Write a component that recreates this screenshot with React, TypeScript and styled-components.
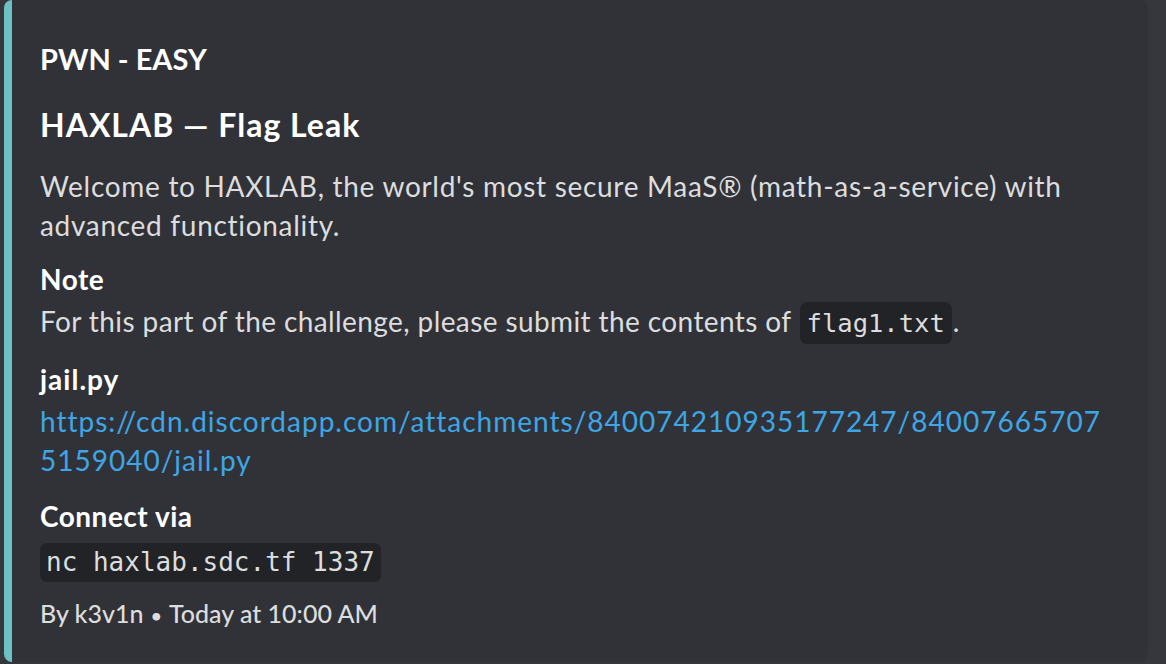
import React from "react";
import styled, { createGlobalStyle } from "styled-components";

const Global = createGlobalStyle`
  html, body {
    margin: 0;
    padding: 0;
    background: #36373c;
    overflow: hidden;
  }
  #root {
    width: 1166px;
    height: 664px;
  }
`;

const Page = styled.div`
  box-sizing: border-box;
  width: 1166px;
  height: 664px;
  padding: 0 18px 0 4px;
  background: #36373c;
  font-family: Lato, "Open Sans", sans-serif;
`;

const Embed = styled.article`
  box-sizing: border-box;
  display: flex;
  flex-direction: column;
  width: 1144px;
  height: 662px;
  padding: 41px 34px 0 28px;
  background: #313237;
  border-left: 8px solid #6cc2c3;
  border-radius: 8px;
`;

const Author = styled.div`
  font-size: 29px;
  line-height: 36px;
  font-weight: 700;
  color: #ffffff;
`;

const Title = styled.div`
  margin-top: 28px;
  font-size: 32px;
  line-height: 40px;
  font-weight: 700;
  letter-spacing: 1px;
  color: #ffffff;
`;

const Description = styled.div`
  margin-top: 22px;
  font-size: 28px;
  line-height: 39px;
  letter-spacing: 0.7px;
  color: #dcddde;
`;

const Fields = styled.div`
  display: flex;
  flex-direction: column;
  gap: 17px;
  margin-top: 15px;
`;

const Field = styled.div`
  display: flex;
  flex-direction: column;
  gap: 3px;
`;

const FieldName = styled.div<{ $spacing?: number }>`
  font-size: 28px;
  line-height: 39px;
  font-weight: 700;
  letter-spacing: ${(p) => p.$spacing ?? 0.5}px;
  color: #ffffff;
`;

const FieldValue = styled.div`
  font-size: 28px;
  line-height: 39px;
  letter-spacing: 0.4px;
  color: #dcddde;
  overflow-wrap: anywhere;
  word-break: break-all;
`;

const InlineCode = styled.code`
  font-family: "DejaVu Sans Mono", "Liberation Mono", monospace;
  font-size: 25.5px;
  letter-spacing: 0;
  padding: 6px 7px;
  margin: 0 1px;
  background: #222326;
  border-radius: 7px;
  color: #dcddde;
`;

const CodeBlock = styled.pre`
  align-self: flex-start;
  margin: 4px 0 0;
  padding: 6px 6px;
  font-family: "DejaVu Sans Mono", "Liberation Mono", monospace;
  font-size: 26px;
  line-height: 27px;
  background: #222326;
  border-radius: 7px;
  color: #dcddde;
`;

const Link = styled.a`
  color: #3ea6e6;
  letter-spacing: 1px;
  text-decoration: none;
`;

const Footer = styled.div`
  margin-top: 15px;
  font-size: 25px;
  line-height: 32px;
  font-weight: 500;
  color: #dcddde;
`;

const Dot = styled.span`
  margin: 0 7px;
  font-size: 20px;
`;

export default function App() {
  return (
    <Page>
      <Global />
      <Embed>
        <Author>PWN - EASY</Author>
        <Title>HAXLAB — Flag Leak</Title>
        <Description>
          Welcome to HAXLAB, the world's most secure MaaS® (math-as-a-service)
          with advanced functionality.
        </Description>
        <Fields>
          <Field>
            <FieldName>Note</FieldName>
            <FieldValue>
              For this part of the challenge, please submit the contents of{" "}
              <InlineCode>flag1.txt</InlineCode>.
            </FieldValue>
          </Field>
          <Field>
            <FieldName $spacing={1}>jail.py</FieldName>
            <FieldValue>
              <Link href="#">
                https://cdn.discordapp.com/attachments/840074210935177247/840076657075159040/jail.py
              </Link>
            </FieldValue>
          </Field>
          <Field>
            <FieldName>Connect via</FieldName>
            <CodeBlock>nc haxlab.sdc.tf 1337</CodeBlock>
          </Field>
        </Fields>
        <Footer>
          By k3v1n<Dot>•</Dot>Today at 10:00 AM
        </Footer>
      </Embed>
    </Page>
  );
}
